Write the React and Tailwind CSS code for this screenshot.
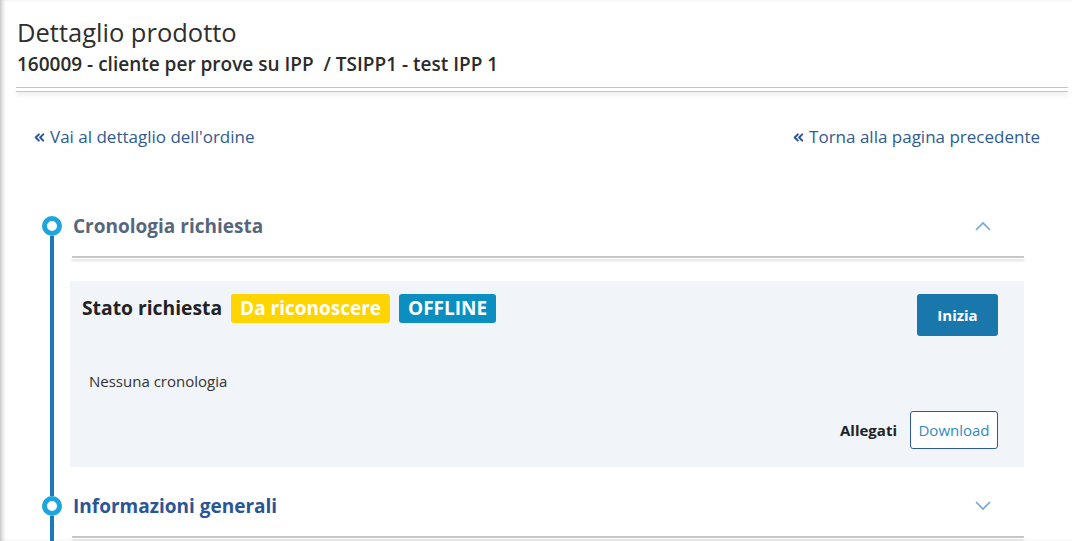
import { ChevronsLeft } from 'lucide-react'

const font = { fontFamily: '"Open Sans", "Noto Sans", sans-serif' }

function Chevron({ up }) {
  return (
    <svg width="16" height="10" viewBox="0 0 16 10" className="shrink-0">
      <path
        d={up ? 'M1 9 L8 2 L15 9' : 'M1 1 L8 8 L15 1'}
        fill="none"
        stroke="#6ea6dc"
        strokeWidth="1.6"
      />
    </svg>
  )
}

function BackLink({ children }) {
  return (
    <a className="flex items-center text-[17px] leading-6 text-[#2f5b8f]">
      <ChevronsLeft size={15} strokeWidth={3.2} className="text-[#2a5597] mr-[3px] -ml-[1px]" />
      {children}
    </a>
  )
}

function Section({ title, open, first, titleColor, children }) {
  return (
    <div className="flex">
      {/* timeline rail */}
      <div className="w-[20px] flex flex-col items-center shrink-0">
        <div className={`w-[4px] h-[10px] ${first ? 'bg-transparent' : 'bg-[#1b7ab3]'}`} />
        <div className="w-[20px] h-[20px] rounded-full border-[5px] border-[#1ea5dc] bg-white shrink-0" />
        <div className="w-[4px] flex-1 bg-[#1b7ab3]" />
      </div>
      <div className="flex-1 ml-[8px]">
        <div className="h-[40px] flex items-center justify-between pl-[3px] pr-[33px]">
          <h3 className={`text-[19px] font-bold ${titleColor}`}>{title}</h3>
          <Chevron up={open} />
        </div>
        <div className="mt-[10px] ml-[2px] h-[3px] border-t-2 border-[#c6c6c6] shadow-[0_2px_3px_rgba(0,0,0,0.12)]" />
        {children}
      </div>
    </div>
  )
}

export default function App() {
  return (
    <div
      style={font}
      className="w-[1072px] h-[541px] overflow-hidden bg-white text-[#2b2b2b] shadow-[inset_4px_0_4px_-2px_rgba(0,0,0,0.25)]"
    >
      {/* page header */}
      <div className="pl-[17px] pt-[13px]">
        <h1 className="text-[25.5px] leading-[38px] font-normal text-[#2e2e2e]">Dettaglio prodotto</h1>
        <h2 className="text-[19px] leading-[26px] font-semibold text-[#2b2b2b] whitespace-pre">
          160009 - cliente per prove su IPP  / TSIPP1 - test IPP 1
        </h2>
      </div>
      <div className="ml-[16px] mr-[4px] mt-[10px] h-[5px] border-t border-b border-[#c4c4c4] shadow-[0_3px_5px_rgba(0,0,0,0.08)]" />

      <div className="pl-[33px] pr-[32px]">
        {/* navigation links */}
        <div className="mt-[33px] flex justify-between">
          <BackLink>Vai al dettaglio dell'ordine</BackLink>
          <BackLink>Torna alla pagina precedente</BackLink>
        </div>

        {/* timeline */}
        <div className="mt-[57px] ml-[9px] mr-[16px]">
          <Section title="Cronologia richiesta" open first titleColor="text-[#56677d]">
            <div className="mt-[22px] mb-[19px] bg-[#f1f4f8] pl-[12px] pr-[26px] pt-[13px] pb-[18px]">
              <div className="flex justify-between items-start">
                <div className="flex items-center">
                  <span className="text-[19.3px] font-bold text-[#222]">Stato richiesta</span>
                  <span className="ml-[9px] h-[29px] px-[9px] flex items-center rounded-[3px] bg-[#ffd500] text-white text-[19px] font-bold">
                    Da riconoscere
                  </span>
                  <span className="ml-[9px] h-[29px] px-[9px] flex items-center rounded-[3px] bg-[#0a8fc0] text-white text-[19px] font-bold">
                    OFFLINE
                  </span>
                </div>
                <button className="w-[81px] h-[42px] rounded-[3px] bg-[#1a77ac] text-white text-[15px] font-bold">
                  Inizia
                </button>
              </div>
              <p className="mt-[35px] pl-[7px] text-[15px] leading-5 text-[#333]">Nessuna cronologia</p>
              <div className="mt-[20px] flex justify-end items-center">
                <span className="text-[15px] font-bold text-[#222] mr-[13px]">Allegati</span>
                <button className="w-[88px] h-[38px] rounded-[3px] border border-[#2d5a90] bg-white text-[15px] text-[#2f8cc2]">
                  Download
                </button>
              </div>
            </div>
          </Section>
          <Section title="Informazioni generali" titleColor="text-[#2a5597]">
            <div className="h-[40px]" />
          </Section>
        </div>
      </div>
    </div>
  )
}
